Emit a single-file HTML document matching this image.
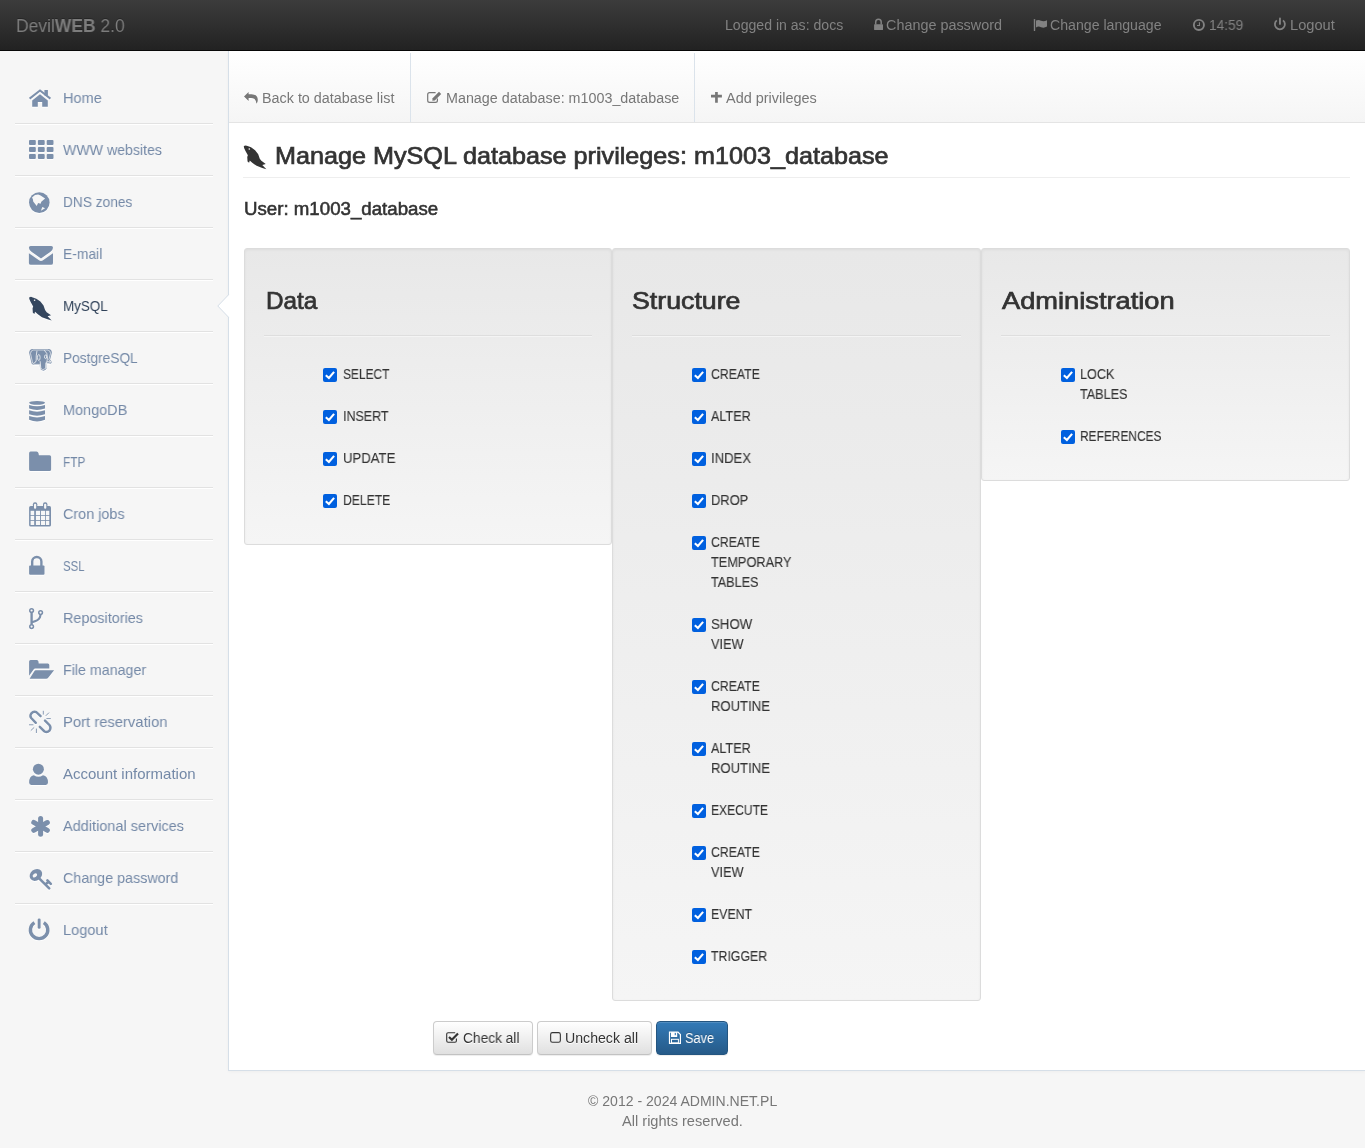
<!DOCTYPE html><html><head><meta charset="utf-8"><style>
html,body{margin:0;padding:0}
body{width:1365px;height:1148px;background:#f6f6f6;font-family:"Liberation Sans",sans-serif;position:relative;overflow:hidden}
.t{position:absolute;white-space:nowrap;line-height:1;transform-origin:0 0;will-change:transform}
.abs{position:absolute}
#hdr{left:0;top:0;width:1365px;height:50px;background:linear-gradient(to bottom,#3c3c3c 0%,#222 100%);border-bottom:1px solid #080808}
#content{left:228px;top:51px;width:1137px;height:1019px;background:#fff;border-left:1px solid #d6dfe8;border-bottom:1px solid #d6dfe8;box-shadow:0 1px 3px rgba(0,0,0,.03)}
#tabs{left:229px;top:51px;width:1136px;height:71px;background:linear-gradient(to bottom,#fff 0%,#f5f5f5 100%);border-bottom:1px solid #e4e4e4}
.vdiv{position:absolute;top:53px;width:1px;height:69px;background:#dbe3eb}
.sdiv{position:absolute;left:15px;width:198px;height:1px;background:#e2e2e2;border-bottom:1px solid #fff}
.well{position:absolute;top:248px;border:1px solid #dcdcdc;border-radius:3px;background:linear-gradient(to bottom,#e8e8e8 0%,#f5f5f5 100%);box-shadow:inset 0 1px 3px rgba(0,0,0,.05),0 1px 0 rgba(255,255,255,.1);box-sizing:border-box}
.hr{position:absolute;height:1px;background:#dedede;border-bottom:1px solid #f4f4f4}
.cb{position:absolute;margin:0;width:13px;height:13px}
.btn{position:absolute;top:1021px;height:34px;box-sizing:border-box;border-radius:4px;border:1px solid #ccc;border-bottom-color:#c2c2c2;background:linear-gradient(to bottom,#fff 0%,#e0e0e0 100%);box-shadow:inset 0 1px 0 rgba(255,255,255,.15),0 1px 1px rgba(0,0,0,.075)}
.btnp{background:linear-gradient(to bottom,#337ab7 0%,#265a88 100%);border-color:#245580}
.sh-w{text-shadow:0 1px 0 #fff}
.sh-d{text-shadow:0 -1px 0 rgba(0,0,0,.25)}
</style></head><body>
<div id="hdr" class="abs"></div>
<div class="t sh-d" style="left:15.90px;top:17.00px;font-size:18px;color:#7d7d7d;transform:scaleX(0.9705)">Devil<b>WEB</b> 2.0</div>
<div class="t" style="left:724.90px;top:17.80px;font-size:14px;color:#828282;transform:scaleX(1.0060);">Logged in as: docs</div>
<div class="t" style="left:886.40px;top:17.80px;font-size:14px;color:#828282;transform:scaleX(1.0275);">Change password</div>
<div class="t" style="left:1050.40px;top:17.80px;font-size:14px;color:#828282;transform:scaleX(1.0090);">Change language</div>
<div class="t" style="left:1209.00px;top:17.80px;font-size:14px;color:#828282;transform:scaleX(0.9771);">14:59</div>
<div class="t" style="left:1289.90px;top:17.80px;font-size:14px;color:#828282;transform:scaleX(1.0467);">Logout</div>
<div id="content" class="abs"></div>
<div id="tabs" class="abs"></div>
<div class="vdiv" style="left:410px"></div>
<div class="vdiv" style="left:694px"></div>
<div class="t" style="left:262.00px;top:90.70px;font-size:14px;color:#777;transform:scaleX(1.0248);">Back to database list</div>
<div class="t" style="left:445.60px;top:90.70px;font-size:14px;color:#777;transform:scaleX(1.0228);">Manage database: m1003_database</div>
<div class="t" style="left:726.30px;top:90.70px;font-size:14px;color:#777;transform:scaleX(1.0319);">Add privileges</div>
<div class="t" style="left:274.60px;top:144.20px;font-size:24px;color:#333;transform:scaleX(1.0491);-webkit-text-stroke:0.7px #333;">Manage MySQL database privileges: m1003_database</div>
<div class="abs" style="left:243px;top:177px;width:1107px;height:1px;background:#eee"></div>
<div class="t" style="left:244.20px;top:199.60px;font-size:18px;color:#333;transform:scaleX(1.0374);-webkit-text-stroke:0.55px #333;">User: m1003_database</div>
<div class="well" style="left:244px;width:368px;height:297px"></div>
<div class="t" style="left:265.70px;top:289.40px;font-size:24px;color:#333;transform:scaleX(1.0118);-webkit-text-stroke:0.7px #333;">Data</div>
<div class="hr" style="left:264px;top:335px;width:328px"></div>
<div class="t" style="left:343.00px;top:367.10px;font-size:14px;color:#333;transform:scaleX(0.8514);-webkit-text-stroke:0.1px #333;">SELECT</div>
<div class="t" style="left:343.00px;top:409.10px;font-size:14px;color:#333;transform:scaleX(0.8904);-webkit-text-stroke:0.1px #333;">INSERT</div>
<div class="t" style="left:343.00px;top:451.10px;font-size:14px;color:#333;transform:scaleX(0.9390);-webkit-text-stroke:0.1px #333;">UPDATE</div>
<div class="t" style="left:343.00px;top:493.10px;font-size:14px;color:#333;transform:scaleX(0.8697);-webkit-text-stroke:0.1px #333;">DELETE</div>
<div class="well" style="left:612px;width:369px;height:753px"></div>
<div class="t" style="left:632.30px;top:289.40px;font-size:24px;color:#333;transform:scaleX(1.1140);-webkit-text-stroke:0.7px #333;">Structure</div>
<div class="hr" style="left:632px;top:335px;width:329px"></div>
<div class="t" style="left:711.00px;top:367.10px;font-size:14px;color:#333;transform:scaleX(0.8761);-webkit-text-stroke:0.1px #333;">CREATE</div>
<div class="t" style="left:711.00px;top:409.10px;font-size:14px;color:#333;transform:scaleX(0.9002);-webkit-text-stroke:0.1px #333;">ALTER</div>
<div class="t" style="left:711.00px;top:451.10px;font-size:14px;color:#333;transform:scaleX(0.9346);-webkit-text-stroke:0.1px #333;">INDEX</div>
<div class="t" style="left:711.00px;top:493.10px;font-size:14px;color:#333;transform:scaleX(0.9233);-webkit-text-stroke:0.1px #333;">DROP</div>
<div class="t" style="left:711.00px;top:535.10px;font-size:14px;color:#333;transform:scaleX(0.8761);-webkit-text-stroke:0.1px #333;">CREATE</div>
<div class="t" style="left:711.00px;top:555.10px;font-size:14px;color:#333;transform:scaleX(0.9106);-webkit-text-stroke:0.1px #333;">TEMPORARY</div>
<div class="t" style="left:711.00px;top:575.10px;font-size:14px;color:#333;transform:scaleX(0.9011);-webkit-text-stroke:0.1px #333;">TABLES</div>
<div class="t" style="left:711.00px;top:617.10px;font-size:14px;color:#333;transform:scaleX(0.9472);-webkit-text-stroke:0.1px #333;">SHOW</div>
<div class="t" style="left:711.00px;top:637.10px;font-size:14px;color:#333;transform:scaleX(0.9106);-webkit-text-stroke:0.1px #333;">VIEW</div>
<div class="t" style="left:711.00px;top:679.10px;font-size:14px;color:#333;transform:scaleX(0.8761);-webkit-text-stroke:0.1px #333;">CREATE</div>
<div class="t" style="left:711.00px;top:699.10px;font-size:14px;color:#333;transform:scaleX(0.9349);-webkit-text-stroke:0.1px #333;">ROUTINE</div>
<div class="t" style="left:711.00px;top:741.10px;font-size:14px;color:#333;transform:scaleX(0.9002);-webkit-text-stroke:0.1px #333;">ALTER</div>
<div class="t" style="left:711.00px;top:761.10px;font-size:14px;color:#333;transform:scaleX(0.9349);-webkit-text-stroke:0.1px #333;">ROUTINE</div>
<div class="t" style="left:711.00px;top:803.10px;font-size:14px;color:#333;transform:scaleX(0.8623);-webkit-text-stroke:0.1px #333;">EXECUTE</div>
<div class="t" style="left:711.00px;top:845.10px;font-size:14px;color:#333;transform:scaleX(0.8761);-webkit-text-stroke:0.1px #333;">CREATE</div>
<div class="t" style="left:711.00px;top:865.10px;font-size:14px;color:#333;transform:scaleX(0.9106);-webkit-text-stroke:0.1px #333;">VIEW</div>
<div class="t" style="left:711.00px;top:907.10px;font-size:14px;color:#333;transform:scaleX(0.8801);-webkit-text-stroke:0.1px #333;">EVENT</div>
<div class="t" style="left:711.00px;top:949.10px;font-size:14px;color:#333;transform:scaleX(0.8793);-webkit-text-stroke:0.1px #333;">TRIGGER</div>
<div class="well" style="left:981px;width:369px;height:233px"></div>
<div class="t" style="left:1001.50px;top:289.40px;font-size:24px;color:#333;transform:scaleX(1.1354);-webkit-text-stroke:0.7px #333;">Administration</div>
<div class="hr" style="left:1001px;top:335px;width:329px"></div>
<div class="t" style="left:1080.00px;top:367.10px;font-size:14px;color:#333;transform:scaleX(0.9029);-webkit-text-stroke:0.1px #333;">LOCK</div>
<div class="t" style="left:1080.00px;top:387.10px;font-size:14px;color:#333;transform:scaleX(0.9011);-webkit-text-stroke:0.1px #333;">TABLES</div>
<div class="t" style="left:1080.00px;top:429.10px;font-size:14px;color:#333;transform:scaleX(0.8516);-webkit-text-stroke:0.1px #333;">REFERENCES</div>
<div class="btn" style="left:433px;width:100px"></div>
<div class="btn" style="left:537px;width:115px"></div>
<div class="btn btnp" style="left:656px;width:72px"></div>
<div class="t" style="left:463.00px;top:1031.00px;font-size:14px;color:#333;transform:scaleX(0.9809);text-shadow:0 1px 0 #fff;">Check all</div>
<div class="t" style="left:565.40px;top:1031.00px;font-size:14px;color:#333;transform:scaleX(1.0097);text-shadow:0 1px 0 #fff;">Uncheck all</div>
<div class="t" style="left:684.60px;top:1031.00px;font-size:14px;color:#fff;transform:scaleX(0.9154);text-shadow:0 -1px 0 rgba(0,0,0,.2);">Save</div>
<div class="t" style="left:587.70px;top:1093.80px;font-size:14px;color:#777;transform:scaleX(1.0037);">&copy; 2012 - 2024 ADMIN.NET.PL</div>
<div class="t" style="left:621.80px;top:1113.80px;font-size:14px;color:#777;transform:scaleX(1.0423);">All rights reserved.</div>
<div class="t" style="left:63.40px;top:90.20px;font-size:15px;color:#7489a7;transform:scaleX(0.9675);">Home</div>
<div class="sdiv" style="top:123px"></div>
<div class="t" style="left:63.40px;top:142.20px;font-size:15px;color:#7489a7;transform:scaleX(0.9419);">WWW websites</div>
<div class="sdiv" style="top:175px"></div>
<div class="t" style="left:63.40px;top:194.20px;font-size:15px;color:#7489a7;transform:scaleX(0.9144);">DNS zones</div>
<div class="sdiv" style="top:227px"></div>
<div class="t" style="left:63.40px;top:246.20px;font-size:15px;color:#7489a7;transform:scaleX(0.9247);">E-mail</div>
<div class="sdiv" style="top:279px"></div>
<div class="t" style="left:63.40px;top:298.20px;font-size:15px;color:#2f4158;transform:scaleX(0.8920);">MySQL</div>
<div class="sdiv" style="top:331px"></div>
<div class="t" style="left:63.40px;top:350.20px;font-size:15px;color:#7489a7;transform:scaleX(0.9143);">PostgreSQL</div>
<div class="sdiv" style="top:383px"></div>
<div class="t" style="left:63.40px;top:402.20px;font-size:15px;color:#7489a7;transform:scaleX(0.9640);">MongoDB</div>
<div class="sdiv" style="top:435px"></div>
<div class="t" style="left:63.40px;top:454.20px;font-size:15px;color:#7489a7;transform:scaleX(0.7915);">FTP</div>
<div class="sdiv" style="top:487px"></div>
<div class="t" style="left:63.40px;top:506.20px;font-size:15px;color:#7489a7;transform:scaleX(0.9595);">Cron jobs</div>
<div class="sdiv" style="top:539px"></div>
<div class="t" style="left:63.40px;top:558.20px;font-size:15px;color:#7489a7;transform:scaleX(0.7606);">SSL</div>
<div class="sdiv" style="top:591px"></div>
<div class="t" style="left:63.40px;top:610.20px;font-size:15px;color:#7489a7;transform:scaleX(0.9592);">Repositories</div>
<div class="sdiv" style="top:643px"></div>
<div class="t" style="left:63.40px;top:662.20px;font-size:15px;color:#7489a7;transform:scaleX(0.9497);">File manager</div>
<div class="sdiv" style="top:695px"></div>
<div class="t" style="left:63.40px;top:714.20px;font-size:15px;color:#7489a7;transform:scaleX(0.9868);">Port reservation</div>
<div class="sdiv" style="top:747px"></div>
<div class="t" style="left:63.40px;top:766.20px;font-size:15px;color:#7489a7;">Account information</div>
<div class="sdiv" style="top:799px"></div>
<div class="t" style="left:63.40px;top:818.20px;font-size:15px;color:#7489a7;transform:scaleX(0.9672);">Additional services</div>
<div class="sdiv" style="top:851px"></div>
<div class="t" style="left:63.40px;top:870.20px;font-size:15px;color:#7489a7;transform:scaleX(0.9537);">Change password</div>
<div class="sdiv" style="top:903px"></div>
<div class="t" style="left:63.40px;top:922.20px;font-size:15px;color:#7489a7;transform:scaleX(0.9739);">Logout</div>
<svg class="abs" style="left:215px;top:292px" width="16" height="28" viewBox="215 292 16 28"><path d="M229,292 V294.5 L218,306 L229,317.5 V320 H231 V292 Z" fill="#fff"/><path d="M228.5,292 V294.8 L217.8,306 L228.5,317.2 V320" fill="none" stroke="#d6dfe8" stroke-width="1"/></svg>
<svg class="abs" style="left:0;top:0" width="1365" height="1148"><rect x="323" y="368" width="14" height="14" rx="2" fill="#0060df"/><path d="M325.8,375.3 L328.9,378 L334.1,371.9" fill="none" stroke="#fff" stroke-width="2.1"/><rect x="323" y="410" width="14" height="14" rx="2" fill="#0060df"/><path d="M325.8,417.3 L328.9,420 L334.1,413.9" fill="none" stroke="#fff" stroke-width="2.1"/><rect x="323" y="452" width="14" height="14" rx="2" fill="#0060df"/><path d="M325.8,459.3 L328.9,462 L334.1,455.9" fill="none" stroke="#fff" stroke-width="2.1"/><rect x="323" y="494" width="14" height="14" rx="2" fill="#0060df"/><path d="M325.8,501.3 L328.9,504 L334.1,497.9" fill="none" stroke="#fff" stroke-width="2.1"/><rect x="692" y="368" width="14" height="14" rx="2" fill="#0060df"/><path d="M694.8,375.3 L697.9,378 L703.1,371.9" fill="none" stroke="#fff" stroke-width="2.1"/><rect x="692" y="410" width="14" height="14" rx="2" fill="#0060df"/><path d="M694.8,417.3 L697.9,420 L703.1,413.9" fill="none" stroke="#fff" stroke-width="2.1"/><rect x="692" y="452" width="14" height="14" rx="2" fill="#0060df"/><path d="M694.8,459.3 L697.9,462 L703.1,455.9" fill="none" stroke="#fff" stroke-width="2.1"/><rect x="692" y="494" width="14" height="14" rx="2" fill="#0060df"/><path d="M694.8,501.3 L697.9,504 L703.1,497.9" fill="none" stroke="#fff" stroke-width="2.1"/><rect x="692" y="536" width="14" height="14" rx="2" fill="#0060df"/><path d="M694.8,543.3 L697.9,546 L703.1,539.9" fill="none" stroke="#fff" stroke-width="2.1"/><rect x="692" y="618" width="14" height="14" rx="2" fill="#0060df"/><path d="M694.8,625.3 L697.9,628 L703.1,621.9" fill="none" stroke="#fff" stroke-width="2.1"/><rect x="692" y="680" width="14" height="14" rx="2" fill="#0060df"/><path d="M694.8,687.3 L697.9,690 L703.1,683.9" fill="none" stroke="#fff" stroke-width="2.1"/><rect x="692" y="742" width="14" height="14" rx="2" fill="#0060df"/><path d="M694.8,749.3 L697.9,752 L703.1,745.9" fill="none" stroke="#fff" stroke-width="2.1"/><rect x="692" y="804" width="14" height="14" rx="2" fill="#0060df"/><path d="M694.8,811.3 L697.9,814 L703.1,807.9" fill="none" stroke="#fff" stroke-width="2.1"/><rect x="692" y="846" width="14" height="14" rx="2" fill="#0060df"/><path d="M694.8,853.3 L697.9,856 L703.1,849.9" fill="none" stroke="#fff" stroke-width="2.1"/><rect x="692" y="908" width="14" height="14" rx="2" fill="#0060df"/><path d="M694.8,915.3 L697.9,918 L703.1,911.9" fill="none" stroke="#fff" stroke-width="2.1"/><rect x="692" y="950" width="14" height="14" rx="2" fill="#0060df"/><path d="M694.8,957.3 L697.9,960 L703.1,953.9" fill="none" stroke="#fff" stroke-width="2.1"/><rect x="1061" y="368" width="14" height="14" rx="2" fill="#0060df"/><path d="M1063.8,375.3 L1066.9,378 L1072.1,371.9" fill="none" stroke="#fff" stroke-width="2.1"/><rect x="1061" y="430" width="14" height="14" rx="2" fill="#0060df"/><path d="M1063.8,437.3 L1066.9,440 L1072.1,433.9" fill="none" stroke="#fff" stroke-width="2.1"/></svg>
<svg class="abs" style="left:0;top:0" width="1365" height="1148" viewBox="0 0 1365 1148"><g transform="translate(0,1)" opacity="0.9"><path d="M29.6,98.6 L40,90.5 L50.4,98.6" fill="none" stroke-width="2" stroke="#fff"/>
<rect x="44.4" y="90" width="3.5" height="5.5" fill="#fff"/>
<path d="M32.2,100.4 L40,94.2 L47.8,100.4 V106.8 H42.2 V101.9 H37.8 V106.8 H32.2 Z" fill="#fff"/>
<rect x="29.0" y="140.0" width="6.8" height="4.9" rx="1" fill="#fff"/>
<rect x="29.0" y="147.0" width="6.8" height="4.9" rx="1" fill="#fff"/>
<rect x="29.0" y="154.0" width="6.8" height="4.9" rx="1" fill="#fff"/>
<rect x="37.9" y="140.0" width="6.8" height="4.9" rx="1" fill="#fff"/>
<rect x="37.9" y="147.0" width="6.8" height="4.9" rx="1" fill="#fff"/>
<rect x="37.9" y="154.0" width="6.8" height="4.9" rx="1" fill="#fff"/>
<rect x="46.7" y="140.0" width="6.8" height="4.9" rx="1" fill="#fff"/>
<rect x="46.7" y="147.0" width="6.8" height="4.9" rx="1" fill="#fff"/>
<rect x="46.7" y="154.0" width="6.8" height="4.9" rx="1" fill="#fff"/>
<circle cx="39.3" cy="202.6" r="10.3" fill="#fff"/>
<path d="M32,197.5 L35,195.1 L38.1,194.4 L40.6,195.5 L45.1,198.6 L41.3,201.7 L40.6,203.8 L38.1,203.1 L36.7,205.9 L33.2,201.4 L32.9,199.3 Z M42.3,207 L45.1,208.3 L40.9,210.8 Z" fill="#fff"/>
<path d="M30.6,245.9 H51.3 Q53,245.9 53,247.8 Q53,250 50.2,252 L41,258.4 L31.8,252 Q28.9,250 28.9,247.8 Q28.9,245.9 30.6,245.9 Z" fill="#fff"/>
<path d="M28.9,253.2 L38.6,260.1 Q41,261.8 43.4,260.1 L53,253.2 V262.9 Q53,264.8 51.1,264.8 H30.8 Q28.9,264.8 28.9,262.9 Z" fill="#fff"/>
<path d="M32.01,348.92 L48.99,348.92 Q51.9,349.6 51.87,352.84 L50.04,359.63 L51.87,361.72 Q51.6,363.9 50.04,363.81 L46.64,363.29 L46.64,368.52 Q45.2,370.9 42.98,370.61 Q40.8,370.4 40.11,368.52 L39.59,364.86 L33.32,364.86 Q31.4,364.3 31.23,361.98 L29.14,352.84 Q29.3,349.5 32.01,348.92 Z" fill="#fff"/>
<path d="M32.01,348.92 L48.99,348.92 Q51.9,349.6 51.87,352.84 L50.04,359.63 L51.87,361.72 Q51.6,363.9 50.04,363.81 L46.64,363.29 L46.64,368.52 Q45.2,370.9 42.98,370.61 Q40.8,370.4 40.11,368.52 L39.59,364.86 L33.32,364.86 Q31.4,364.3 31.23,361.98 L29.14,352.84 Q29.3,349.5 32.01,348.92 Z" fill="none" stroke="#fff" stroke-width="0.75" transform="translate(40.5,359.7) scale(0.88,0.9) translate(-40.5,-359.7)"/>
<path d="M36.97,350.75 Q35.9,355.9 36.19,360.68 Q35.9,362.6 33.58,363.29 M40.11,361.2 L40.89,369.04 M46.38,361.72 L45.86,368.52 M44.29,350.23 Q47.7,352.6 47.43,358.06 L46.9,361.72 L51.6,361.72" fill="none" stroke="#fff" stroke-width="0.8"/>
<ellipse cx="38.8" cy="357.5" rx="1.3" ry="3" fill="none" stroke="#fff" stroke-width="0.8"/><ellipse cx="45.6" cy="356.8" rx="1.1" ry="1.8" fill="none" stroke="#fff" stroke-width="0.8"/>
<ellipse cx="37.05" cy="402.8" rx="7.95" ry="1.9" fill="#fff"/>
<path d="M29.1,405 Q37,407.4 45,405 V408.5 Q37,411.3 29.1,408.5 Z M29.1,410.3 Q37,413.2 45,410.3 V414.3 Q37,417 29.1,414.3 Z M29.1,416.1 Q37,418.8 45,416.1 V419.8 Q37,423.4 29.1,419.8 Z" fill="#fff"/>
<path d="M30.6,451.6 H36.5 Q38,451.6 38.5,453.3 L38.9,455.2 H49.5 Q51.1,455.2 51.1,456.8 V469.4 Q51.1,471 49.5,471 H30.7 Q29.1,471 29.1,469.4 V453.2 Q29.1,451.6 30.6,451.6 Z" fill="#fff"/>
<rect x="29.1" y="506.1" width="21.9" height="20.3" rx="1.5" fill="#fff"/>
<rect x="30.6" y="510.8" width="3.6" height="4.2" fill="#fff"/>
<rect x="30.6" y="515.8" width="3.6" height="4.2" fill="#fff"/>
<rect x="30.6" y="520.8" width="3.6" height="4.2" fill="#fff"/>
<rect x="35.9" y="510.8" width="4.1" height="4.2" fill="#fff"/>
<rect x="35.9" y="515.8" width="4.1" height="4.2" fill="#fff"/>
<rect x="35.9" y="520.8" width="4.1" height="4.2" fill="#fff"/>
<rect x="40.9" y="510.8" width="4.2" height="4.2" fill="#fff"/>
<rect x="40.9" y="515.8" width="4.2" height="4.2" fill="#fff"/>
<rect x="40.9" y="520.8" width="4.2" height="4.2" fill="#fff"/>
<rect x="45.9" y="510.8" width="3.4" height="4.2" fill="#fff"/>
<rect x="45.9" y="515.8" width="3.4" height="4.2" fill="#fff"/>
<rect x="45.9" y="520.8" width="3.4" height="4.2" fill="#fff"/>
<rect x="32.9" y="502.3" width="4.4" height="7" rx="2" fill="#fff"/><rect x="34.0" y="503.8" width="2.2" height="5" rx="1" fill="#fff"/>
<rect x="43.0" y="502.3" width="4.4" height="7" rx="2" fill="#fff"/><rect x="44.1" y="503.8" width="2.2" height="5" rx="1" fill="#fff"/>
<rect x="29.1" y="565.4" width="15.4" height="9.4" rx="1" fill="#fff"/>
<path d="M32.2,566 V561.6 A4.6,4.6 0 0 1 41.4,561.6 V566" fill="none" stroke="#fff" stroke-width="2.4"/>
<path d="M31.6,612.4 V624.8" fill="none" stroke="#fff" stroke-width="2.4"/><path d="M32,622.2 Q38.6,620.6 39.9,617.4 L40.6,614.4" fill="none" stroke="#fff" stroke-width="2.1"/>
<circle cx="31.6" cy="610.5" r="1.85" fill="#fff" stroke="#fff" stroke-width="1.5"/>
<circle cx="31.6" cy="626.6" r="1.85" fill="#fff" stroke="#fff" stroke-width="1.5"/>
<circle cx="40.6" cy="612.6" r="1.85" fill="#fff" stroke="#fff" stroke-width="1.5"/>
<path d="M29.1,661.5 Q29.1,660 30.6,660 H36.8 Q38.3,660 38.5,661.8 L38.7,663.6 H47.8 Q49.3,663.6 49.3,665.1 V668.6 H35.2 Q34.2,668.6 33.6,669.4 L29.1,675.7 Z" fill="#fff"/>
<path d="M35.7,670.3 H54.1 L48,678 Q47.4,678.8 46.3,678.8 H29.6 L34.5,671 Q35,670.3 35.7,670.3 Z" fill="#fff"/>
<path d="M35.8,722.8 L31.2,718 Q29.6,716 31.2,713.6 Q33.5,711 36.4,712.2 L40.6,716.2 M45,720.6 L49.6,725.2 Q51.4,727.6 49.5,730.6 Q47,733 44.2,731.2 L39.8,726.8" fill="none" stroke="#fff" stroke-width="2.4" stroke-linecap="round"/>
<path d="M43.3,710.8 V714.6 M49,712.6 L45.8,715.8 M46.4,718.6 H50.8 M29,724.8 H33.4 M30.8,730.6 L34.2,727.4 M36.4,728.6 V733" fill="none" stroke="#fff" stroke-width="0.9"/>
<circle cx="38.4" cy="769.2" r="5.5" fill="#fff"/>
<path d="M29.1,782.6 Q29.1,776.2 33.8,775.3 Q38.4,778.4 43,775.3 Q48,776.2 48,782.6 Q48,785 45.8,785 H31.3 Q29.1,785 29.1,782.6 Z" fill="#fff"/>
<line x1="40.6" y1="818.6" x2="40.6" y2="834.3" stroke="#fff" stroke-width="5" stroke-linecap="round" transform="rotate(0 40.6 826.4)"/>
<line x1="40.6" y1="818.6" x2="40.6" y2="834.3" stroke="#fff" stroke-width="5" stroke-linecap="round" transform="rotate(60 40.6 826.4)"/>
<line x1="40.6" y1="818.6" x2="40.6" y2="834.3" stroke="#fff" stroke-width="5" stroke-linecap="round" transform="rotate(120 40.6 826.4)"/>
<ellipse cx="35.9" cy="874.9" rx="6.7" ry="5.5" transform="rotate(-38 35.9 874.9)" fill="#fff"/><ellipse cx="34.9" cy="875.4" rx="2.5" ry="1.7" transform="rotate(-38 34.9 875.4)" fill="#fff"/>
<path d="M39.4,878.6 L49.2,888.4 M45.4,884.6 L48.4,881.6 M47.4,880.4 L50.8,883.8" fill="none" stroke="#fff" stroke-width="2.6" stroke-linecap="round"/>
<path d="M34.4,922.6 A8.7,8.7 0 1 0 43.8,922.6" fill="none" stroke="#fff" stroke-width="3.4"/>
<rect x="37.7" y="918.4" width="2.9" height="10.4" rx="1.4" fill="#fff"/><path d="M29.09,297.4 L30.97,296.78 L32.85,297.4 L36.3,298.66 L40.38,301.48 L43.51,305.55 L45.08,309.94 L46.65,312.14 L51.03,315.27 L47.59,316.21 L51.66,320.6 L47.59,319.35 L41.94,317.15 L37.55,314.02 L35.05,311.82 L34.42,314.02 L32.85,312.77 L32.54,308.38 L33.17,306.5 L30.66,302.11 L29.4,299.28 Z" fill="#fff"/></g>
<path d="M29.6,98.6 L40,90.5 L50.4,98.6" fill="none" stroke-width="2" stroke="#7b8fab"/>
<rect x="44.4" y="90" width="3.5" height="5.5" fill="#7b8fab"/>
<path d="M32.2,100.4 L40,94.2 L47.8,100.4 V106.8 H42.2 V101.9 H37.8 V106.8 H32.2 Z" fill="#7b8fab"/>
<rect x="29.0" y="140.0" width="6.8" height="4.9" rx="1" fill="#7b8fab"/>
<rect x="29.0" y="147.0" width="6.8" height="4.9" rx="1" fill="#7b8fab"/>
<rect x="29.0" y="154.0" width="6.8" height="4.9" rx="1" fill="#7b8fab"/>
<rect x="37.9" y="140.0" width="6.8" height="4.9" rx="1" fill="#7b8fab"/>
<rect x="37.9" y="147.0" width="6.8" height="4.9" rx="1" fill="#7b8fab"/>
<rect x="37.9" y="154.0" width="6.8" height="4.9" rx="1" fill="#7b8fab"/>
<rect x="46.7" y="140.0" width="6.8" height="4.9" rx="1" fill="#7b8fab"/>
<rect x="46.7" y="147.0" width="6.8" height="4.9" rx="1" fill="#7b8fab"/>
<rect x="46.7" y="154.0" width="6.8" height="4.9" rx="1" fill="#7b8fab"/>
<circle cx="39.3" cy="202.6" r="10.3" fill="#7b8fab"/>
<path d="M32,197.5 L35,195.1 L38.1,194.4 L40.6,195.5 L45.1,198.6 L41.3,201.7 L40.6,203.8 L38.1,203.1 L36.7,205.9 L33.2,201.4 L32.9,199.3 Z M42.3,207 L45.1,208.3 L40.9,210.8 Z" fill="#f7f7f7"/>
<path d="M30.6,245.9 H51.3 Q53,245.9 53,247.8 Q53,250 50.2,252 L41,258.4 L31.8,252 Q28.9,250 28.9,247.8 Q28.9,245.9 30.6,245.9 Z" fill="#7b8fab"/>
<path d="M28.9,253.2 L38.6,260.1 Q41,261.8 43.4,260.1 L53,253.2 V262.9 Q53,264.8 51.1,264.8 H30.8 Q28.9,264.8 28.9,262.9 Z" fill="#7b8fab"/>
<path d="M32.01,348.92 L48.99,348.92 Q51.9,349.6 51.87,352.84 L50.04,359.63 L51.87,361.72 Q51.6,363.9 50.04,363.81 L46.64,363.29 L46.64,368.52 Q45.2,370.9 42.98,370.61 Q40.8,370.4 40.11,368.52 L39.59,364.86 L33.32,364.86 Q31.4,364.3 31.23,361.98 L29.14,352.84 Q29.3,349.5 32.01,348.92 Z" fill="#7b8fab"/>
<path d="M32.01,348.92 L48.99,348.92 Q51.9,349.6 51.87,352.84 L50.04,359.63 L51.87,361.72 Q51.6,363.9 50.04,363.81 L46.64,363.29 L46.64,368.52 Q45.2,370.9 42.98,370.61 Q40.8,370.4 40.11,368.52 L39.59,364.86 L33.32,364.86 Q31.4,364.3 31.23,361.98 L29.14,352.84 Q29.3,349.5 32.01,348.92 Z" fill="none" stroke="#f7f7f7" stroke-width="0.75" transform="translate(40.5,359.7) scale(0.88,0.9) translate(-40.5,-359.7)"/>
<path d="M36.97,350.75 Q35.9,355.9 36.19,360.68 Q35.9,362.6 33.58,363.29 M40.11,361.2 L40.89,369.04 M46.38,361.72 L45.86,368.52 M44.29,350.23 Q47.7,352.6 47.43,358.06 L46.9,361.72 L51.6,361.72" fill="none" stroke="#f7f7f7" stroke-width="0.8"/>
<ellipse cx="38.8" cy="357.5" rx="1.3" ry="3" fill="none" stroke="#f7f7f7" stroke-width="0.8"/><ellipse cx="45.6" cy="356.8" rx="1.1" ry="1.8" fill="none" stroke="#f7f7f7" stroke-width="0.8"/>
<ellipse cx="37.05" cy="402.8" rx="7.95" ry="1.9" fill="#7b8fab"/>
<path d="M29.1,405 Q37,407.4 45,405 V408.5 Q37,411.3 29.1,408.5 Z M29.1,410.3 Q37,413.2 45,410.3 V414.3 Q37,417 29.1,414.3 Z M29.1,416.1 Q37,418.8 45,416.1 V419.8 Q37,423.4 29.1,419.8 Z" fill="#7b8fab"/>
<path d="M30.6,451.6 H36.5 Q38,451.6 38.5,453.3 L38.9,455.2 H49.5 Q51.1,455.2 51.1,456.8 V469.4 Q51.1,471 49.5,471 H30.7 Q29.1,471 29.1,469.4 V453.2 Q29.1,451.6 30.6,451.6 Z" fill="#7b8fab"/>
<rect x="29.1" y="506.1" width="21.9" height="20.3" rx="1.5" fill="#7b8fab"/>
<rect x="30.6" y="510.8" width="3.6" height="4.2" fill="#f7f7f7"/>
<rect x="30.6" y="515.8" width="3.6" height="4.2" fill="#f7f7f7"/>
<rect x="30.6" y="520.8" width="3.6" height="4.2" fill="#f7f7f7"/>
<rect x="35.9" y="510.8" width="4.1" height="4.2" fill="#f7f7f7"/>
<rect x="35.9" y="515.8" width="4.1" height="4.2" fill="#f7f7f7"/>
<rect x="35.9" y="520.8" width="4.1" height="4.2" fill="#f7f7f7"/>
<rect x="40.9" y="510.8" width="4.2" height="4.2" fill="#f7f7f7"/>
<rect x="40.9" y="515.8" width="4.2" height="4.2" fill="#f7f7f7"/>
<rect x="40.9" y="520.8" width="4.2" height="4.2" fill="#f7f7f7"/>
<rect x="45.9" y="510.8" width="3.4" height="4.2" fill="#f7f7f7"/>
<rect x="45.9" y="515.8" width="3.4" height="4.2" fill="#f7f7f7"/>
<rect x="45.9" y="520.8" width="3.4" height="4.2" fill="#f7f7f7"/>
<rect x="32.9" y="502.3" width="4.4" height="7" rx="2" fill="#7b8fab"/><rect x="34.0" y="503.8" width="2.2" height="5" rx="1" fill="#f7f7f7"/>
<rect x="43.0" y="502.3" width="4.4" height="7" rx="2" fill="#7b8fab"/><rect x="44.1" y="503.8" width="2.2" height="5" rx="1" fill="#f7f7f7"/>
<rect x="29.1" y="565.4" width="15.4" height="9.4" rx="1" fill="#7b8fab"/>
<path d="M32.2,566 V561.6 A4.6,4.6 0 0 1 41.4,561.6 V566" fill="none" stroke="#7b8fab" stroke-width="2.4"/>
<path d="M31.6,612.4 V624.8" fill="none" stroke="#7b8fab" stroke-width="2.4"/><path d="M32,622.2 Q38.6,620.6 39.9,617.4 L40.6,614.4" fill="none" stroke="#7b8fab" stroke-width="2.1"/>
<circle cx="31.6" cy="610.5" r="1.85" fill="#f7f7f7" stroke="#7b8fab" stroke-width="1.5"/>
<circle cx="31.6" cy="626.6" r="1.85" fill="#f7f7f7" stroke="#7b8fab" stroke-width="1.5"/>
<circle cx="40.6" cy="612.6" r="1.85" fill="#f7f7f7" stroke="#7b8fab" stroke-width="1.5"/>
<path d="M29.1,661.5 Q29.1,660 30.6,660 H36.8 Q38.3,660 38.5,661.8 L38.7,663.6 H47.8 Q49.3,663.6 49.3,665.1 V668.6 H35.2 Q34.2,668.6 33.6,669.4 L29.1,675.7 Z" fill="#7b8fab"/>
<path d="M35.7,670.3 H54.1 L48,678 Q47.4,678.8 46.3,678.8 H29.6 L34.5,671 Q35,670.3 35.7,670.3 Z" fill="#7b8fab"/>
<path d="M35.8,722.8 L31.2,718 Q29.6,716 31.2,713.6 Q33.5,711 36.4,712.2 L40.6,716.2 M45,720.6 L49.6,725.2 Q51.4,727.6 49.5,730.6 Q47,733 44.2,731.2 L39.8,726.8" fill="none" stroke="#7b8fab" stroke-width="2.4" stroke-linecap="round"/>
<path d="M43.3,710.8 V714.6 M49,712.6 L45.8,715.8 M46.4,718.6 H50.8 M29,724.8 H33.4 M30.8,730.6 L34.2,727.4 M36.4,728.6 V733" fill="none" stroke="#7b8fab" stroke-width="0.9"/>
<circle cx="38.4" cy="769.2" r="5.5" fill="#7b8fab"/>
<path d="M29.1,782.6 Q29.1,776.2 33.8,775.3 Q38.4,778.4 43,775.3 Q48,776.2 48,782.6 Q48,785 45.8,785 H31.3 Q29.1,785 29.1,782.6 Z" fill="#7b8fab"/>
<line x1="40.6" y1="818.6" x2="40.6" y2="834.3" stroke="#7b8fab" stroke-width="5" stroke-linecap="round" transform="rotate(0 40.6 826.4)"/>
<line x1="40.6" y1="818.6" x2="40.6" y2="834.3" stroke="#7b8fab" stroke-width="5" stroke-linecap="round" transform="rotate(60 40.6 826.4)"/>
<line x1="40.6" y1="818.6" x2="40.6" y2="834.3" stroke="#7b8fab" stroke-width="5" stroke-linecap="round" transform="rotate(120 40.6 826.4)"/>
<ellipse cx="35.9" cy="874.9" rx="6.7" ry="5.5" transform="rotate(-38 35.9 874.9)" fill="#7b8fab"/><ellipse cx="34.9" cy="875.4" rx="2.5" ry="1.7" transform="rotate(-38 34.9 875.4)" fill="#f7f7f7"/>
<path d="M39.4,878.6 L49.2,888.4 M45.4,884.6 L48.4,881.6 M47.4,880.4 L50.8,883.8" fill="none" stroke="#7b8fab" stroke-width="2.6" stroke-linecap="round"/>
<path d="M34.4,922.6 A8.7,8.7 0 1 0 43.8,922.6" fill="none" stroke="#7b8fab" stroke-width="3.4"/>
<rect x="37.7" y="918.4" width="2.9" height="10.4" rx="1.4" fill="#7b8fab"/>
<path d="M29.09,297.4 L30.97,296.78 L32.85,297.4 L36.3,298.66 L40.38,301.48 L43.51,305.55 L45.08,309.94 L46.65,312.14 L51.03,315.27 L47.59,316.21 L51.66,320.6 L47.59,319.35 L41.94,317.15 L37.55,314.02 L35.05,311.82 L34.42,314.02 L32.85,312.77 L32.54,308.38 L33.17,306.5 L30.66,302.11 L29.4,299.28 Z" fill="#34465e"/><circle cx="34.6" cy="300.3" r="0.8" fill="#f7f7f7"/>
<g transform="translate(214.7,-151.3)"><path d="M29.09,297.4 L30.97,296.78 L32.85,297.4 L36.3,298.66 L40.38,301.48 L43.51,305.55 L45.08,309.94 L46.65,312.14 L51.03,315.27 L47.59,316.21 L51.66,320.6 L47.59,319.35 L41.94,317.15 L37.55,314.02 L35.05,311.82 L34.42,314.02 L32.85,312.77 L32.54,308.38 L33.17,306.5 L30.66,302.11 L29.4,299.28 Z" fill="#333"/><circle cx="34.6" cy="300.3" r="0.8" fill="#fff"/></g>
<rect x="874.1" y="24.2" width="8.9" height="5.9" rx="0.5" fill="#828282"/><path d="M875.7,24.6 V22.1 A2.75,2.75 0 0 1 881.2,22.1 V24.6" fill="none" stroke="#828282" stroke-width="1.5"/>
<rect x="1033.8" y="18.9" width="1.4" height="12.1" rx="0.6" fill="#828282"/><path d="M1036,20.6 Q1038.5,19.4 1041,20.8 Q1044,22 1047,20.2 V26.6 Q1044,28.4 1041,27.2 Q1038.5,25.8 1036,27.4 Z" fill="#828282"/>
<circle cx="1198.9" cy="24.95" r="5.05" fill="none" stroke="#828282" stroke-width="1.9"/><path d="M1199.45,22.2 V25.5 H1197" fill="none" stroke="#828282" stroke-width="1.1"/>
<path d="M1276.8,20.4 A5,5 0 1 0 1283,20.4" fill="none" stroke="#828282" stroke-width="1.8"/><rect x="1279" y="17.6" width="1.9" height="7.2" rx="0.9" fill="#828282"/>
<g transform="translate(0,1)"><path d="M244,96.4 L248.6,91.9 V94.2 H251.5 Q257.8,94.5 257.8,100 Q257.8,102 256.5,103.8 Q256.2,98 251,98 H248.6 V100.9 Z" fill="#fff"/></g>
<path d="M244,96.4 L248.6,91.9 V94.2 H251.5 Q257.8,94.5 257.8,100 Q257.8,102 256.5,103.8 Q256.2,98 251,98 H248.6 V100.9 Z" fill="#777"/>
<path d="M435.6,92.6 H429.6 Q427.7,92.6 427.7,94.5 V100.4 Q427.7,102.3 429.6,102.3 H435.5 Q437.4,102.3 437.4,100.4 V98.6" fill="none" stroke="#777" stroke-width="1.2"/>
<path d="M432.3,100.8 L432.6,98.2 L439,91.8 L441.2,94 L434.8,100.5 Z" fill="#777"/>
<path d="M711,96.05 H721.9 M716.45,92 V102.8" stroke="#777" stroke-width="2.7"/>
<path d="M455.2,1032.7 H448.1 Q446.7,1032.7 446.7,1034.1 V1040.8 Q446.7,1042.2 448.1,1042.2 H455 Q456.4,1042.2 456.4,1040.8 V1038.4" fill="none" stroke="#333" stroke-width="1.1"/>
<path d="M449,1037 L451.9,1039.8 L458,1033.6" fill="none" stroke="#333" stroke-width="2.2"/>
<rect x="550.65" y="1032.6" width="9.7" height="9.6" rx="1.8" fill="none" stroke="#333" stroke-width="1.1"/>
<path d="M669.5,1032.1 H678 L680.4,1034.5 V1043.4 H669.5 Z" fill="none" stroke="#fff" stroke-width="1.2"/>
<path d="M671,1032.1 H677.2 V1037 H671 Z" fill="#fff"/><rect x="674.7" y="1032.9" width="1.2" height="2.3" fill="#3c7dbb"/>
<rect x="671.5" y="1039.3" width="6.9" height="3.6" fill="none" stroke="#fff" stroke-width="1"/></svg>
</body></html>
